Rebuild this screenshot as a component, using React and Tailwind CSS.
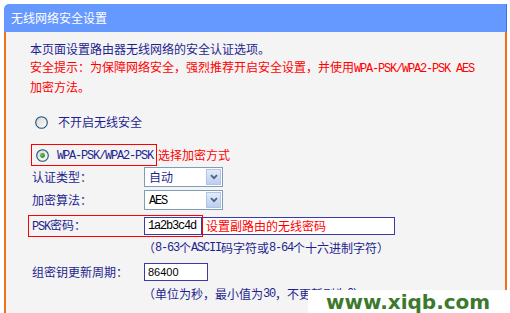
import React from "react";

const M = ({ children }) => (
  <span className="font-['Liberation_Mono',monospace] text-[12px] tracking-[-1.2px]">{children}</span>
);

function Radio({ checked, id }) {
  return (
    <svg width="13" height="13" viewBox="0 0 13 13" className="shrink-0">
      <defs>
        <linearGradient id={id} x1="0" y1="0" x2="1" y2="1">
          <stop offset="0" stopColor="#d6d4cc" />
          <stop offset="1" stopColor="#ffffff" />
        </linearGradient>
        <radialGradient id={id + "d"} cx="0.4" cy="0.4" r="0.6">
          <stop offset="0" stopColor="#5fd35f" />
          <stop offset="1" stopColor="#1a8a1a" />
        </radialGradient>
      </defs>
      <circle cx="6.5" cy="6.5" r="5.8" fill={`url(#${id})`} stroke="#1c5180" strokeWidth="1.1" />
      {checked && <circle cx="6.5" cy="6.5" r="2.4" fill={`url(#${id}d)`} />}
    </svg>
  );
}

function Select({ children }) {
  return (
    <div className="flex h-[20px] w-[79px] border border-[#7f9db9] bg-white">
      <div className="flex flex-1 items-center pl-[4px] leading-none">{children}</div>
      <div className="m-[1px] flex w-[15px] items-center justify-center border border-[#b1c3e6] bg-gradient-to-b from-[#e3ebfb] to-[#bccdee]">
        <svg width="8" height="6" viewBox="0 0 8 6">
          <path d="M1 1.2 L4 4.2 L7 1.2" fill="none" stroke="#4d6185" strokeWidth="1.8" />
        </svg>
      </div>
    </div>
  );
}

export default function App() {
  return (
    <div className="relative h-[313px] w-[510px] overflow-hidden bg-white font-['Noto_Sans_CJK_SC',sans-serif] text-[12px]">
      <div className="ml-[4px] mt-[4px] flex h-[309px] w-[503px] flex-col">
        <div className="flex h-[28px] items-center rounded-tl-[5px] border-r border-[#3f6fe8] bg-[#6699ff] pl-[7px] leading-none text-white">
          无线网络安全设置
        </div>
        <div className="flex-1 border-l-2 border-r-2 border-[#f07018] bg-[#f4f4f4] pl-[24px] pt-[8px] text-[#1f1f8f]">
          <div className="leading-[18px]">
            <p>本页面设置路由器无线网络的安全认证选项。</p>
            <p className="text-[#ff0000]">
              安全提示：为保障网络安全，强烈推荐开启安全设置，并使用<M>WPA-PSK/WPA2-PSK AES</M>
            </p>
            <p className="text-[#ff0000]">加密方法。</p>
          </div>

          <div className="mt-[16px] flex h-[20px] items-center pl-[5px]">
            <Radio id="r1" />
            <span className="ml-[10px] leading-none">不开启无线安全</span>
          </div>

          <div className="mt-[12px] flex h-[22px] items-center">
            <div className="ml-[1px] flex h-[22px] w-[126px] items-center border border-[#ff0000] pl-[4px]">
              <Radio id="r2" checked />
              <span className="ml-[8px] leading-none">
                <M>WPA-PSK/WPA2-PSK</M>
              </span>
            </div>
            <span className="ml-[1px] leading-none text-[#ff0000]">选择加密方式</span>
          </div>

          <div className="ml-[2px]">
            <div className="mt-[1px] flex h-[20px] items-center">
              <span className="w-[112px] leading-none">认证类型：</span>
              <Select>自动</Select>
            </div>
            <div className="mt-[3px] flex h-[20px] items-center">
              <span className="w-[112px] leading-none">加密算法：</span>
              <Select>
                <span className="text-black">
                  <M>AES</M>
                </span>
              </Select>
            </div>
            <div className="relative mt-[5px] flex h-[22px] items-center">
              <span className="w-[112px] leading-none">
                <M>PSK</M>密码：
              </span>
              <div className="flex h-[18px] w-[58px] items-center border border-[#3a3aa8] bg-white pl-[3px] leading-none text-black">
                <M>1a2b3c4d</M>
              </div>
              <div className="flex h-[18px] w-[193px] items-center border border-l-0 border-[#3a3aa8] bg-white pl-[4px] leading-none text-[#ff0000]">
                设置副路由的无线密码
              </div>
              <div className="absolute left-[-4px] top-0 h-[22px] w-[175px] border border-[#ff0000]" />
            </div>
            <div className="mt-[2px] flex h-[18px] items-center pl-[111px] leading-none">
              （<M>8-63</M>个<M>ASCII</M>码字符或<M>8-64</M>个十六进制字符）
            </div>
            <div className="mt-[5px] flex h-[20px] items-center">
              <span className="w-[112px] leading-none">组密钥更新周期：</span>
              <div className="flex h-[18px] w-[64px] items-center border border-[#3a3aa8] bg-white pl-[3px] font-['Liberation_Sans',sans-serif] text-[11px] text-black">
                86400
              </div>
            </div>
            <div className="mt-[3px] flex h-[18px] items-center pl-[111px] leading-none">
              （单位为秒，最小值为<M>30</M>，不更新则为<M>0</M>）
            </div>
          </div>
        </div>
      </div>

      <div className="absolute left-[308px] top-[290px] flex h-[23px] w-[202px] items-center bg-white pl-[18px]">
        <span className="font-['DejaVu_Sans',sans-serif] text-[20px] font-bold leading-none text-[#3b7a2c]">
          www.xiqb.com
        </span>
      </div>
    </div>
  );
}
